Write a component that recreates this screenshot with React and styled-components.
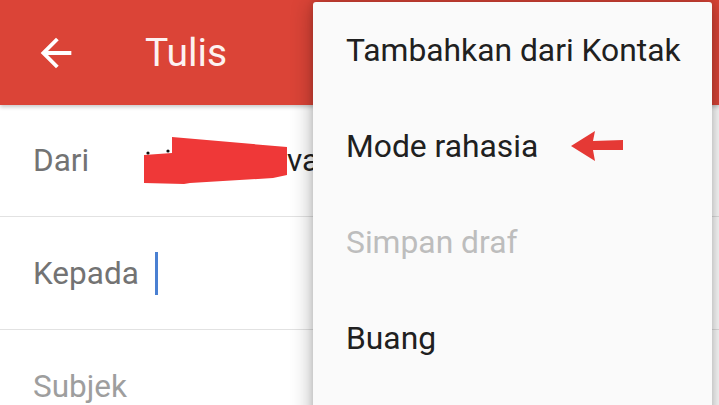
import React from 'react'
import styled, { createGlobalStyle } from 'styled-components'

const GlobalStyle = createGlobalStyle`
    html, body {
        margin: 0;
        padding: 0;
        background: #ffffff;
    }
    body {
        font-family: Roboto, "Noto Sans", "Liberation Sans", sans-serif;
        -webkit-font-smoothing: antialiased;
    }
`

const Screen = styled.div`
    position: relative;
    width: 719px;
    height: 405px;
    overflow: hidden;
    background: #ffffff;
`

const Header = styled.header`
    position: relative;
    z-index: 1;
    display: flex;
    align-items: center;
    height: 105px;
    padding-left: 33px;
    box-sizing: border-box;
    background: #db4437;
    box-shadow: 0 2px 4px rgba(0, 0, 0, 0.22);
`

const BackButton = styled.div`
    display: flex;
    width: 46px;
    height: 46px;
    color: #ffffff;
`

const Title = styled.h1`
    margin: 0 0 0 66px;
    font-size: 39px;
    font-weight: 400;
    color: #fdf2f1;
`

const Form = styled.div`
    display: flex;
    flex-direction: column;
`

const Row = styled.div`
    display: flex;
    align-items: center;
    height: ${p => p.$h || 113}px;
    padding-left: 33px;
    box-sizing: border-box;
    border-bottom: 1px solid #e2e2e2;
    white-space: nowrap;
    font-size: 31.5px;
`

const Label = styled.span`
    width: ${p => p.$w ? `${p.$w}px` : 'auto'};
    flex-shrink: 0;
    color: ${p => p.$placeholder ? '#9e9e9e' : '#737373'};
`

const Value = styled.span`
    display: flex;
    align-items: center;
    max-width: 169px;
    overflow: hidden;
    color: #1f1f1f;
`

const Cursor = styled.span`
    display: inline-block;
    width: 3px;
    height: 43px;
    margin-left: 16px;
    background: #4a80d2;
`

const Menu = styled.div`
    position: absolute;
    top: 2px;
    left: 313px;
    z-index: 2;
    width: 399px;
    height: 440px;
    background: #fafafa;
    border-radius: 3px;
    box-shadow: 0 2px 22px rgba(0, 0, 0, 0.32), 0 0 6px rgba(0, 0, 0, 0.12);
`

const MenuItem = styled.div`
    display: flex;
    align-items: center;
    gap: 33px;
    height: 96px;
    padding-left: 33px;
    font-size: 31.8px;
    color: ${p => p.$disabled ? '#bdbdbd' : '#202020'};
`

const ArrowBack = () => (
    <svg width="46" height="46" viewBox="0 0 24 24" fill="currentColor">
        <path d="M20 11H7.83l5.59-5.59L12 4l-8 8 8 8 1.41-1.41L7.83 13H20v-2z" />
    </svg>
)

const Scribble = () => (
    <svg width="143" height="47" viewBox="0 0 143 47" style={{ flexShrink: 0 }}>
        <polygon
            points="0,46 0,18 28,16 28,0 143,10 143,38 129,41 46,46 40,47"
            fill="#ef3838"
        />
        <circle cx="4" cy="16" r="1.6" fill="#111" />
        <circle cx="24" cy="14" r="1.6" fill="#111" />
    </svg>
)

const PointerArrow = () => (
    <svg width="52" height="31" viewBox="0 0 52 31">
        <polygon
            points="0,15 24,0 22,10 52,9 52,19 22,19 24,30"
            fill="#e53935"
        />
    </svg>
)

const menuItems = [
    { label: 'Tambahkan dari Kontak' },
    { label: 'Mode rahasia', marked: true },
    { label: 'Simpan draf', disabled: true },
    { label: 'Buang' },
]

const App = () => {
    return (
        <Screen>
            <GlobalStyle />
            <Header>
                <BackButton>
                    <ArrowBack />
                </BackButton>
                <Title>Tulis</Title>
            </Header>
            <Form>
                <Row $h={112}>
                    <Label $w={111}>Dari</Label>
                    <Value>
                        <Scribble />
                        va
                    </Value>
                </Row>
                <Row>
                    <Label>Kepada</Label>
                    <Cursor />
                </Row>
                <Row>
                    <Label $placeholder>Subjek</Label>
                </Row>
            </Form>
            <Menu>
                {menuItems.map(item => (
                    <MenuItem key={item.label} $disabled={item.disabled}>
                        {item.label}
                        {item.marked && <PointerArrow />}
                    </MenuItem>
                ))}
            </Menu>
        </Screen>
    )
}

export default App
